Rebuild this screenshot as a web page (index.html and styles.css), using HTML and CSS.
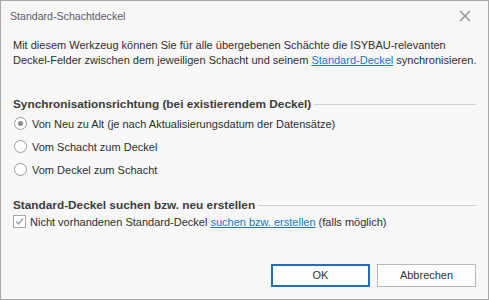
FILE: index.html
```html
<!DOCTYPE html>
<html lang="de">
<head>
<meta charset="UTF-8" />
<link rel="stylesheet" href="styles.css">
</head>
<body>
<div class="dialog">
    <div class="titlebar">
        <span class="title">Standard-Schachtdeckel</span>
        <button class="close" title="Schließen">
            <svg width="12" height="12" viewBox="0 0 12 12"><path d="M1 1L11 11M11 1L1 11" stroke="#8a8a8a" stroke-width="1.3" fill="none"/></svg>
        </button>
    </div>

    <p class="intro">Mit diesem Werkzeug können Sie für alle übergebenen Schächte die ISYBAU-relevanten<br>Deckel-Felder zwischen dem jeweiligen Schacht und seinem <a href="#">Standard-Deckel</a> synchronisieren.</p>

    <div class="group">
        <div class="group-head"><span>Synchronisationsrichtung (bei existierendem Deckel)</span></div>
        <label class="radio-row"><span class="radio checked"></span>Von Neu zu Alt (je nach Aktualisierungsdatum der Datensätze)</label>
        <label class="radio-row"><span class="radio"></span>Vom Schacht zum Deckel</label>
        <label class="radio-row"><span class="radio"></span>Vom Deckel zum Schacht</label>
    </div>

    <div class="group group2">
        <div class="group-head"><span>Standard-Deckel suchen bzw. neu erstellen</span></div>
        <label class="check-row">
            <span class="check"><svg width="11" height="11" viewBox="0 0 11 11"><path d="M2 5.5L4.5 8L9 2.5" stroke="#9a9a9a" stroke-width="1.2" fill="none"/></svg></span>
            Nicht vorhandenen Standard-Deckel&nbsp;<a href="#">suchen bzw. erstellen</a>&nbsp;(falls möglich)
        </label>
    </div>

    <div class="buttons">
        <button class="btn default">OK</button>
        <button class="btn">Abbrechen</button>
    </div>
</div>
</body>
</html>
```

FILE: styles.css
```css
html, body {
    margin: 0;
    padding: 0;
}
body {
    font-family: "Liberation Sans", Arial, sans-serif;
    font-size: 11px;
    color: #2e2e2e;
}
.dialog {
    width: 487px;
    height: 298px;
    border: 1px solid #a8a8a8;
    background: #f7f7f7;
    display: flex;
    flex-direction: column;
}
.titlebar {
    display: flex;
    justify-content: space-between;
    align-items: center;
    height: 30px;
    padding: 0 17px 0 9px;
}
.title {
    color: #5a5a6a;
    font-size: 10.6px;
}
.close {
    all: unset;
    display: flex;
    cursor: pointer;
}
.intro {
    margin: 7px 12px 0 12px;
    line-height: 15px;
    white-space: nowrap;
}
a {
    color: #1a78c2;
    text-decoration: underline;
}
.group {
    margin: 28px 12px 0 12px;
}
.group2 {
    margin-top: 16px;
}
.group-head {
    display: flex;
    align-items: center;
    gap: 3px;
    font-weight: bold;
    font-size: 11.8px;
    color: #3c3c3c;
    height: 16px;
}
.group-head::after {
    content: "";
    flex: 1;
    height: 1px;
    background: #cfcfcf;
}
.radio-row {
    display: flex;
    align-items: center;
    gap: 5px;
    height: 23px;
    padding-left: 1px;
}
.radio {
    width: 11px;
    height: 11px;
    border: 1px solid #9a9a9a;
    border-radius: 50%;
    background: #fff;
    display: flex;
    align-items: center;
    justify-content: center;
}
.radio.checked::after {
    content: "";
    width: 5px;
    height: 5px;
    border-radius: 50%;
    background: #8a8a8a;
}
.check-row {
    display: flex;
    align-items: center;
    height: 17px;
}
.check {
    width: 11px;
    height: 11px;
    border: 1px solid #a8a8a8;
    background: #fff;
    display: flex;
    margin-right: 4px;
}
.buttons {
    margin-top: auto;
    display: flex;
    justify-content: flex-end;
    gap: 7px;
    padding: 0 12px 12px 0;
}
.btn {
    all: unset;
    box-sizing: border-box;
    width: 99px;
    height: 23px;
    border: 1px solid #b8b8b8;
    background: #fdfdfd;
    text-align: center;
    line-height: 21px;
    color: #333;
    cursor: pointer;
}
.btn.default {
    border: 2px solid #1f6fba;
    line-height: 19px;
}
```
